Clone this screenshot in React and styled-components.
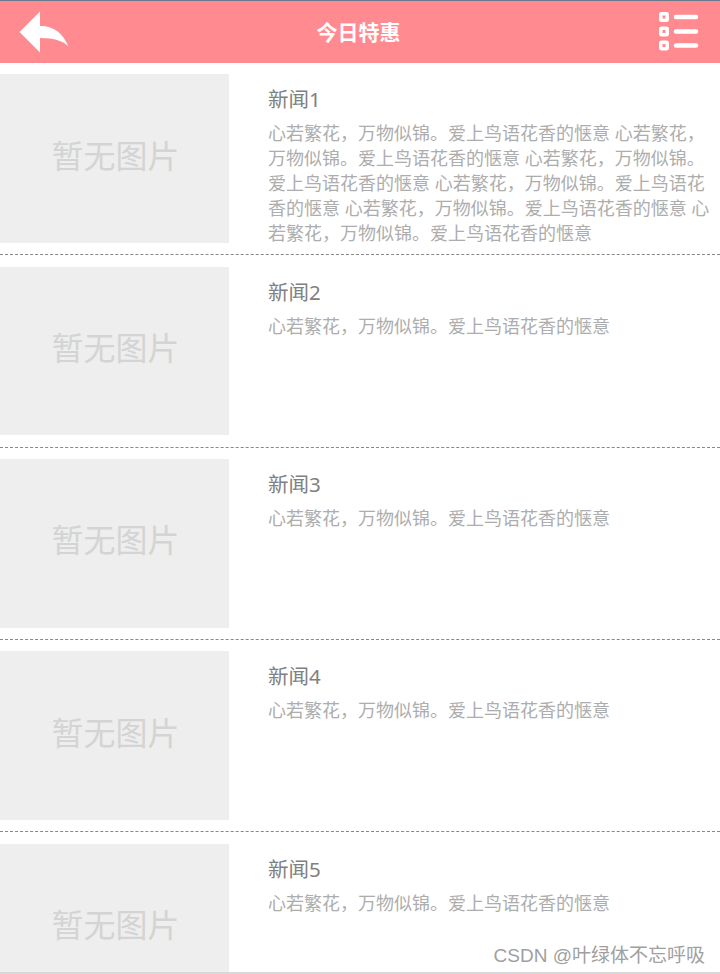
import React from "react";
import styled, { createGlobalStyle } from "styled-components";

const GlobalStyle = createGlobalStyle`
  html, body {
    margin: 0;
    padding: 0;
    height: 100%;
    background: #fff;
    overflow: hidden;
    font-family: "Noto Sans", "Noto Sans CJK SC", sans-serif;
  }
`;

const SENTENCE = "心若繁花，万物似锦。爱上鸟语花香的惬意";

const news = [
  { id: 1, title: "新闻1", text: Array(6).fill(SENTENCE).join(" ") },
  { id: 2, title: "新闻2", text: SENTENCE },
  { id: 3, title: "新闻3", text: SENTENCE },
  { id: 4, title: "新闻4", text: SENTENCE },
  { id: 5, title: "新闻5", text: SENTENCE },
];

const BackIcon = () => (
  <svg width="50" height="42" viewBox="0 0 50 42">
    <path
      d="M0.5 21 L21 0.5 V15 C36 15 44 23 49.5 35.5 C44 30 36 27 21 27 V41.5 Z"
      fill="#fff"
    />
  </svg>
);

const MenuIcon = () => (
  <svg width="40" height="42" viewBox="0 0 40 42" fill="none">
    {[6, 20.5, 34.5].map((y) => (
      <g key={y}>
        <rect x="1.75" y={y - 3.25} width="6.5" height="6.5" rx="1" stroke="#fff" strokeWidth="3.5" />
        <line x1="17" y1={y} x2="37" y2={y} stroke="#fff" strokeWidth="4.5" strokeLinecap="round" />
      </g>
    ))}
  </svg>
);

const App = () => {
  return (
    <Page>
      <GlobalStyle />
      <Header>
        <BackIcon />
        <HeaderTitle>今日特惠</HeaderTitle>
        <MenuIcon />
      </Header>
      <List>
        {news.map((item) => (
          <Row key={item.id}>
            <Thumb>暂无图片</Thumb>
            <Body>
              <Title>{item.title}</Title>
              <Desc>{item.text}</Desc>
            </Body>
          </Row>
        ))}
      </List>
      <Watermark>CSDN @叶绿体不忘呼吸</Watermark>
    </Page>
  );
};

const Page = styled.div`
  position: relative;
  width: 720px;
  height: 974px;
  overflow: hidden;
  border-bottom: 2px solid #d8d8d8;
  box-sizing: border-box;
`;

const Header = styled.header`
  height: 63px;
  box-sizing: border-box;
  border-top: 1px solid #6b7a8a;
  background: #ff8a90;
  display: flex;
  align-items: center;
  justify-content: space-between;
  padding: 0 21px 0 19px;
`;

const HeaderTitle = styled.h1`
  margin: 0 11px 2px 0;
  color: #fff;
  font-size: 21px;
  font-weight: 700;
`;

const List = styled.div`
  display: flex;
  flex-direction: column;
`;

const Row = styled.div`
  flex: none;
  height: 192.3px;
  box-sizing: border-box;
  padding-top: 11.4px;
  border-bottom: 1px dashed #888;
  display: flex;
`;

const Thumb = styled.div`
  flex: none;
  width: 229px;
  height: 168.7px;
  background: #eee;
  color: #d4d4d4;
  font-size: 32px;
  display: flex;
  align-items: center;
  justify-content: center;
  padding: 0 0 10px 2px;
  box-sizing: border-box;
`;

const Body = styled.div`
  flex: 1;
  min-width: 0;
  padding: 10px 6px 0 39px;
`;

const Title = styled.div`
  color: #808080;
  font-size: 20.5px;
  line-height: 30px;
`;

const Desc = styled.p`
  margin: 7px 0 0;
  color: #adadad;
  font-size: 18px;
  line-height: 24.8px;
`;

const Watermark = styled.div`
  position: absolute;
  right: 15px;
  bottom: 3px;
  color: #a0a0a0;
  font-family: "Liberation Sans", "Noto Sans CJK SC", sans-serif;
  font-size: 19px;
  line-height: 26px;
`;

export default App;
